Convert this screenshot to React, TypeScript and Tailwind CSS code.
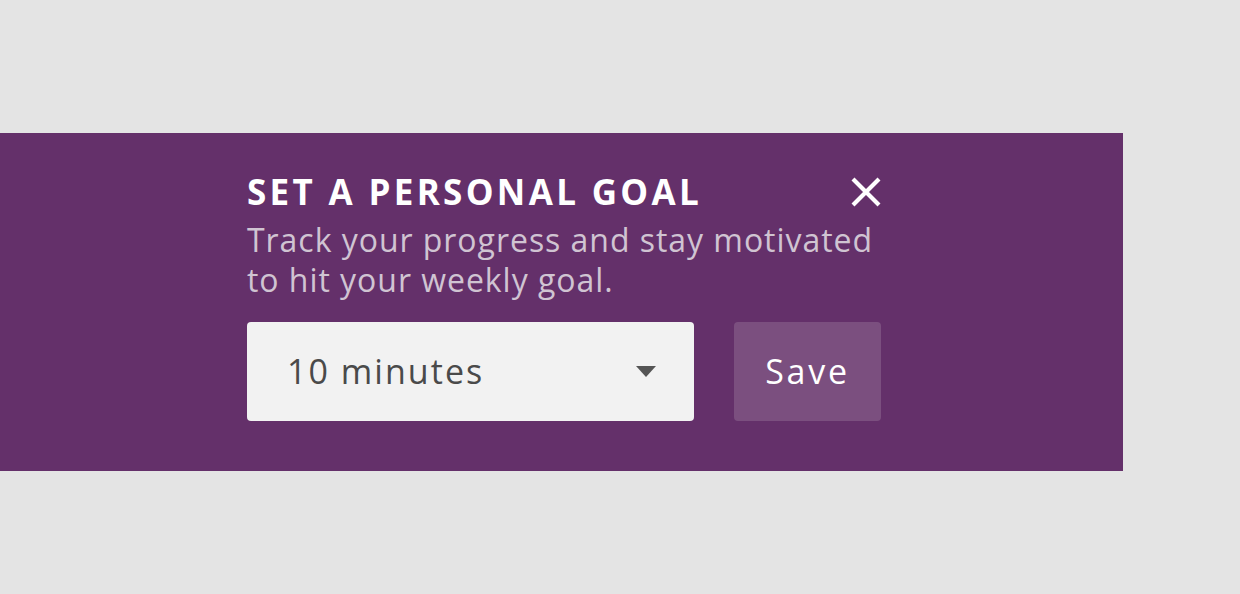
export default function App() {
  return (
    <div className="min-h-[594px] w-full bg-[#e4e4e4] pt-[133px] font-['Open_Sans',sans-serif]">
      <section className="w-[1123px] h-[338px] bg-[#64306a] pl-[247px] pt-[41px]">
        <div className="w-[634px]">
          <div className="flex items-center justify-between mb-[11px]">
            <h2 className="text-[35px] font-bold tracking-[0.095em] text-white leading-none">
              SET A PERSONAL GOAL
            </h2>
            <button className="text-white">
              <svg width="30" height="30" viewBox="0 0 30 30">
                <path d="M2 2 L28 28 M28 2 L2 28" stroke="currentColor" strokeWidth="4.2" />
              </svg>
            </button>
          </div>
          <p className="text-[32px] leading-[40px] text-[#d0c4d2] tracking-[0.03em]">
            Track your progress and stay motivated
            <br />
            to hit your weekly goal.
          </p>
          <div className="flex items-center gap-[40px] mt-[22px]">
            <div className="flex items-center justify-between w-[447px] h-[99px] rounded-[4px] bg-[#f2f2f2] pl-[40px] pr-[38px]">
              <span className="text-[34px] text-[#4a4a4a] tracking-[0.06em]">10 minutes</span>
              <svg width="20" height="11" viewBox="0 0 20 11">
                <path d="M0 0 L20 0 L10 11 Z" fill="#555" />
              </svg>
            </div>
            <button className="w-[147px] h-[99px] rounded-[4px] bg-[#7b4f7f] text-white text-[34px] tracking-[0.08em]">
              Save
            </button>
          </div>
        </div>
      </section>
    </div>
  );
}
